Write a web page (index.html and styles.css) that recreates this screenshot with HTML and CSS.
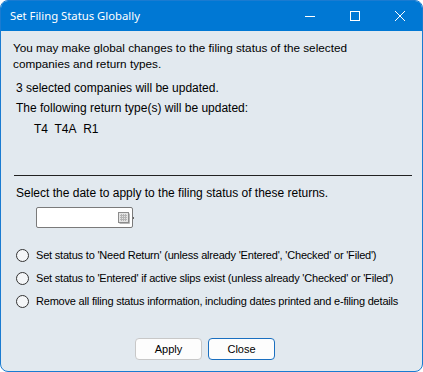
FILE: index.html
```html
<!DOCTYPE html>
<html>
<head>
<meta charset="utf-8">
<link rel="stylesheet" href="styles.css">
</head>
<body>
<div class="window">
  <div class="titlebar">
    <span class="title">Set Filing Status Globally</span>
    <div class="controls">
      <span class="ctl"><svg width="12" height="12" viewBox="0 0 12 12"><path d="M1 6.5h10" stroke="#fff" stroke-width="1"/></svg></span>
      <span class="ctl"><svg width="12" height="12" viewBox="0 0 12 12"><rect x="1.5" y="1.5" width="9" height="9" fill="none" stroke="#fff" stroke-width="1"/></svg></span>
      <span class="ctl"><svg width="12" height="12" viewBox="0 0 12 12"><path d="M1 1L11 11M11 1L1 11" stroke="#fff" stroke-width="1"/></svg></span>
    </div>
  </div>
  <div class="content">
    <p class="intro">You may make global changes to the filing status of the selected companies and return types.</p>
    <p class="info first">3 selected companies will be updated.</p>
    <p class="info">The following return type(s) will be updated:</p>
    <p class="types">T4&nbsp; T4A&nbsp; R1</p>
    <div class="sep"></div>
    <p class="info">Select the date to apply to the filing status of these returns.</p>
    <div class="daterow">
      <div class="datebox">
        <svg class="cal" width="12" height="12" viewBox="0 0 12 12">
          <rect x="0.5" y="0.5" width="10" height="10" fill="#e4e4e4" stroke="#8c8c8c"/>
          <path d="M2 3.5h7M2 5.5h7M2 7.5h7M3.5 2v7M5.5 2v7M7.5 2v7" stroke="#b4b4b4" stroke-width="1"/>
          <path d="M11.5 1.5v10H1.5" fill="none" stroke="#b8b8b8" stroke-width="1"/>
        </svg>
      </div>
      <span class="dot"></span>
    </div>
    <div class="options">
      <label class="opt"><span class="radio"></span>Set status to 'Need Return' (unless already 'Entered', 'Checked' or 'Filed')</label>
      <label class="opt"><span class="radio"></span>Set status to 'Entered' if active slips exist (unless already 'Checked' or 'Filed')</label>
      <label class="opt"><span class="radio"></span>Remove all filing status information, including dates printed and e-filing details</label>
    </div>
    <div class="buttons">
      <button class="btn">Apply</button>
      <button class="btn default">Close</button>
    </div>
  </div>
</div>
</body>
</html>
```

FILE: styles.css
```css
html, body {
  margin: 0;
  padding: 0;
  background: #ffffff;
}
.window {
  width: 423px;
  height: 372px;
  box-sizing: border-box;
  border: 1px solid #1a7bd1;
  border-radius: 8px;
  overflow: hidden;
  background: #e2e9ef;
  display: flex;
  flex-direction: column;
  font-family: "Liberation Sans", Arial, sans-serif;
  font-size: 12px;
  color: #000;
}
.titlebar {
  height: 30px;
  flex: none;
  background: #0078d4;
  display: flex;
  align-items: center;
  justify-content: space-between;
  color: #fff;
}
.title {
  font-family: "Noto Sans", "Open Sans", sans-serif;
  font-size: 11.3px;
  padding-left: 9px;
  padding-bottom: 1px;
}
.controls {
  display: flex;
  height: 100%;
}
.ctl {
  width: 45px;
  display: flex;
  align-items: center;
  justify-content: center;
}
.content {
  flex: 1;
  display: flex;
  flex-direction: column;
  padding: 9px 10px 0 12px;
}
p {
  margin: 0;
}
.intro {
  line-height: 16px;
  width: 360px;
  font-size: 11.75px;
}
.info {
  padding-left: 3px;
  line-height: 16px;
  margin-top: 4px;
}
.info.first {
  margin-top: 8px;
}
.types {
  padding-left: 21px;
  margin-top: 5px;
  line-height: 16px;
}
.sep {
  height: 1px;
  background: #222;
  margin: 38px 0 5px 1px;
}
.daterow {
  display: flex;
  align-items: center;
  margin: 6px 0 0 23px;
}
.datebox {
  width: 93px;
  height: 19px;
  background: #fff;
  border: 1px solid #7a7a7a;
  border-radius: 2px;
  display: flex;
  align-items: center;
  justify-content: flex-end;
  padding-right: 2px;
}
.dot {
  width: 1px;
  height: 2px;
  background: #666;
}
.options {
  display: flex;
  flex-direction: column;
  gap: 7px;
  margin-top: 19px;
  padding-left: 3px;
}
.opt {
  display: flex;
  align-items: center;
  gap: 7px;
  line-height: 16px;
  font-size: 11px;
  letter-spacing: -0.2px;
  white-space: nowrap;
}
.radio {
  width: 11px;
  height: 11px;
  border: 1px solid #333;
  border-radius: 50%;
  background: #f4f6f8;
  flex: none;
}
.buttons {
  display: flex;
  gap: 6px;
  margin: 29px 0 0 122px;
}
.btn {
  width: 67px;
  height: 22px;
  font-family: "Liberation Sans", Arial, sans-serif;
  font-size: 11px;
  background: #fdfdfd;
  border: 1px solid #c8c8c8;
  border-radius: 4px;
  padding: 0;
  color: #000;
}
.btn.default {
  border: 1.5px solid #1a6fc0;
}
```
